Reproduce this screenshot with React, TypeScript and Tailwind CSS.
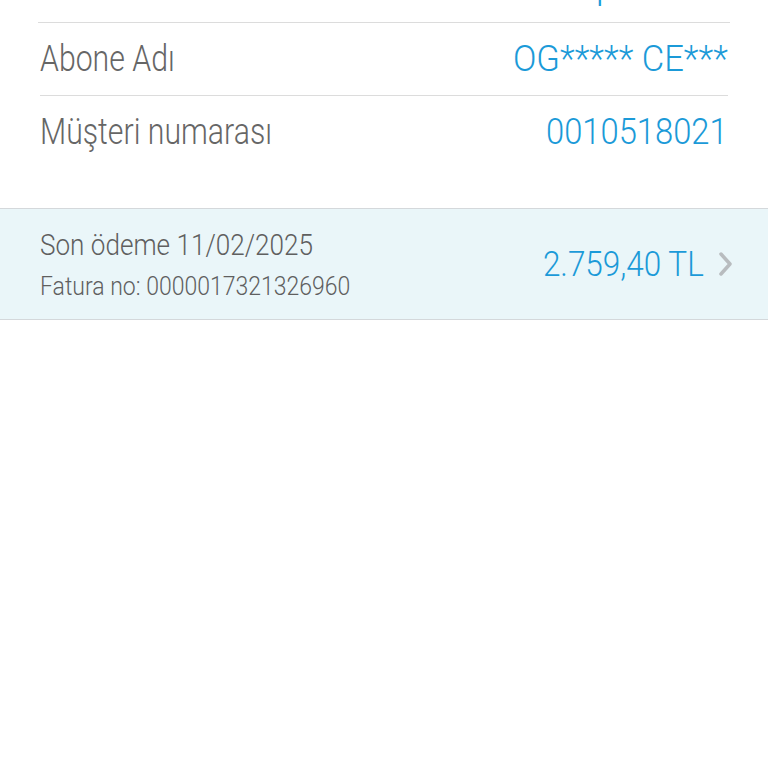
import React from "react";

const font = { fontFamily: "Roboto, 'Noto Sans', sans-serif" };

function Row({ label, value, vs }: { label: string; value: string; vs: string }) {
  return (
    <div className="flex items-center justify-between h-[72px] px-[40px]">
      <span className="inline-block origin-left scale-x-[0.84] text-[36px] font-light text-[#666] whitespace-nowrap leading-none">
        {label}
      </span>
      <span className={"inline-block origin-right text-[36px] font-light text-[#1b9ad8] whitespace-nowrap leading-none " + vs}>
        {value}
      </span>
    </div>
  );
}

export default function App() {
  return (
    <div className="w-[768px] h-[768px] bg-white overflow-hidden" style={font}>
      <div className="-mt-[50px] flex items-center justify-end h-[72px] px-[40px] pr-[152px]">
        <span className="text-[36px] font-light text-[#1b9ad8] leading-none">p</span>
      </div>
      <div className="mx-[38px] h-px bg-[#dcdcdc]" />
      <Row label="Abone Adı" value="OG***** CE***" vs="scale-x-[0.96]" />
      <div className="mx-[40px] h-px bg-[#dcdcdc]" />
      <Row label="Müşteri numarası" value="0010518021" vs="scale-x-[0.91]" />
      <div className="h-[40px]" />
      <div className="flex items-center justify-between h-[112px] border-y border-[#d4d8db] bg-[#eaf6f9] pl-[40px] pr-[34px]">
        <div className="flex flex-col gap-[14px]">
          <span className="inline-block origin-left scale-x-[0.87] text-[30px] font-light text-[#5f5f5f] whitespace-nowrap leading-none">
            Son ödeme 11/02/2025
          </span>
          <span className="inline-block origin-left scale-x-[0.92] text-[25px] font-light text-[#5f5f5f] whitespace-nowrap leading-none">
            Fatura no: 0000017321326960
          </span>
        </div>
        <div className="flex items-center gap-[14px]">
          <span className="inline-block origin-right scale-x-[0.9] text-[35px] font-light text-[#1b9ad8] whitespace-nowrap leading-none">
            2.759,40 TL
          </span>
          <svg width="16" height="26" viewBox="0 0 16 26" className="shrink-0">
            <path d="M3 3 L12 13 L3 23" fill="none" stroke="#b8bcbf" strokeWidth="3.5" strokeLinecap="round" strokeLinejoin="round" />
          </svg>
        </div>
      </div>
    </div>
  );
}
